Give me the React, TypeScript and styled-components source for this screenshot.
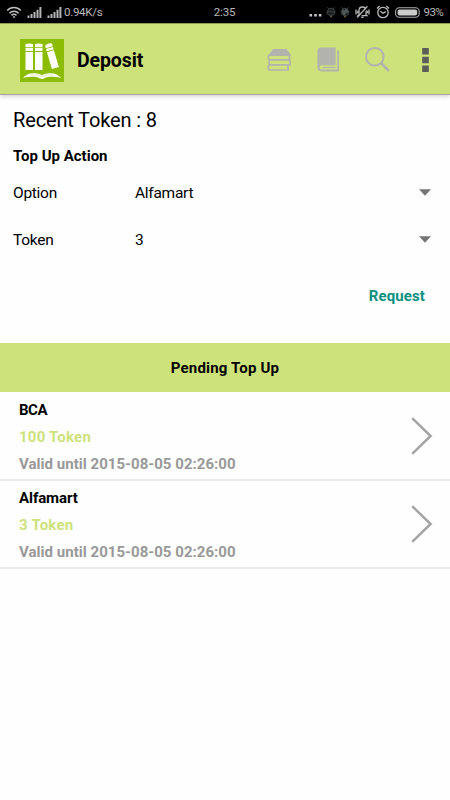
import React from 'react';
import styled, { createGlobalStyle } from 'styled-components';

const LIME = '#cde27b';

const GlobalStyle = createGlobalStyle`
  *, *::before, *::after { box-sizing: border-box; }
  body {
    margin: 0;
    background: #fff;
    font-family: Roboto, 'Liberation Sans', sans-serif;
    color: #000;
  }
`;

const Screen = styled.div`
  width: 450px;
  height: 800px;
  display: flex;
  flex-direction: column;
  overflow: hidden;
  background: #fefefe;
`;

const StatusBar = styled.header`
  height: 23px;
  flex: none;
  display: grid;
  grid-template-columns: 1fr auto 1fr;
  align-items: center;
  padding: 1px 7px 0 6px;
  background: #000;
  color: #b9b9b9;
  font-size: 11.5px;
  line-height: 22px;
`;

const StatusGroup = styled.div<{ $end?: boolean }>`
  display: flex;
  align-items: center;
  justify-content: ${(p) => (p.$end ? 'flex-end' : 'flex-start')};
  svg { display: block; flex: none; }
`;

const StatusText = styled.span<{ $spacing?: number }>`
  letter-spacing: ${(p) => p.$spacing ?? 0}px;
  white-space: nowrap;
`;

const AppBar = styled.nav`
  height: 72px;
  flex: none;
  display: flex;
  align-items: center;
  justify-content: space-between;
  padding: 1px 21px 0 20px;
  background: ${LIME};
  border-top: 1px solid #8d9c58;
  border-bottom: 1px solid #a5a5a5;
  box-shadow: 0 1px 5px rgba(0, 0, 0, 0.2);
  svg { display: block; flex: none; }
`;

const Brand = styled.div`
  display: flex;
  align-items: center;
  padding-top: 2px;
`;

const Title = styled.h1`
  margin: 0 0 0 13px;
  font-size: 19.5px;
  line-height: 24px;
  font-weight: 700;
  letter-spacing: -0.1px;
`;

const Actions = styled.div`
  display: flex;
  align-items: center;
`;

const Form = styled.section`
  height: 248px;
  flex: none;
  padding: 12px 13px 0;
`;

const Balance = styled.div`
  height: 26px;
  font-size: 20px;
  line-height: 26px;
  letter-spacing: -0.15px;
`;

const FormHeading = styled.h2`
  margin: 13px 0 0;
  font-size: 15px;
  line-height: 20px;
  font-weight: 700;
`;

const Field = styled.div`
  height: 47px;
  display: grid;
  grid-template-columns: 122px 1fr 18px;
  align-items: center;
  font-size: 15.5px;
  line-height: 20px;
  letter-spacing: -0.28px;
`;

const Fields = styled.div`
  padding-top: 3px;
`;

const FormActions = styled.div`
  display: flex;
  justify-content: flex-end;
  padding: 21px 12px 0 0;
`;

const RequestButton = styled.button`
  margin: 0;
  padding: 0;
  border: 0;
  background: none;
  color: #0c9080;
  font: 700 15px/24px Roboto, 'Liberation Sans', sans-serif;
  letter-spacing: 0.1px;
`;

const SectionHeader = styled.h2`
  height: 49px;
  flex: none;
  margin: 0;
  display: flex;
  align-items: center;
  justify-content: center;
  background: ${LIME};
  font-size: 15px;
  font-weight: 700;
  letter-spacing: 0.18px;
`;

const PendingList = styled.ul`
  list-style: none;
  margin: 0;
  padding: 1px 0 0;
`;

const PendingItem = styled.li`
  height: 88px;
  display: flex;
  align-items: center;
  justify-content: space-between;
  padding: 0 17px 0 19px;
  border-bottom: 2px solid #ebebeb;
`;

const ItemText = styled.div`
  padding-top: 2px;
`;

const ItemLine = styled.div<{ $color: string; $spacing?: number }>`
  color: ${(p) => p.$color};
  font-size: 15px;
  line-height: 27px;
  font-weight: 700;
  letter-spacing: ${(p) => p.$spacing ?? 0}px;
`;

const WifiIcon = () => (
  <svg width="16" height="13" viewBox="0 0 16 13" fill="none" stroke="#bdbdbd" strokeWidth="1.5">
    <path d="M1.2 4.6C5 .5 11 .5 14.8 4.6M3.4 7.2c2.6-2.7 6.6-2.7 9.2 0M5.5 9.4c1.5-1.4 3.5-1.4 5 0" />
    <circle cx="8" cy="11" r=".9" fill="#bdbdbd" stroke="none" />
  </svg>
);

const SignalIcon = () => (
  <svg width="15" height="11" viewBox="0 0 15 11" fill="#b4b4b4">
    <path d="M.5 8.5h2V11h-2zM3.5 7h2v4h-2zM6.5 5h2v6h-2zM9.5 2.7h2V11h-2zM12.4 0h2v11h-2z" />
  </svg>
);

const DotsIcon = () => (
  <svg width="13" height="10" viewBox="0 0 13 10" fill="#c4c4c4">
    <path d="M.5 7h2.6v2.6H.5zM5.2 7h2.6v2.6H5.2zM9.8 7h2.6v2.6H9.8z" />
  </svg>
);

const DroidIcon = ({ alt = false }: { alt?: boolean }) => (
  <svg width="10" height="12" viewBox="0 0 10 12" fill="none" stroke="#394040" strokeWidth="1">
    <path d="M1.4 1.2l1.3 1.5M8.6 1.2L7.3 2.7M.3 5.8h9.4M1.5 5.5a3.5 3.3 0 0 1 7 0v2.6L7 9.2H3L1.5 8.1z" fill="#1b1e1e" />
    {alt && <path d="M3 3.5v4.5h2V4h2v3" stroke="#6f7777" />}
    <path d="M4.2 9.8h1.6v1.4H4.2z" fill="#87713a" stroke="none" />
  </svg>
);

const SilentIcon = () => (
  <svg width="15" height="14" viewBox="0 0 15 14" fill="none" stroke="#b4b4b4" strokeWidth="1.3">
    <path d="M4 9.7V5.6C4 3.3 5.3 2 7.4 2S11 3.3 11 5.6v4.1l1 .9H3l1-.9zM6.3 12.3h2.3M1 4.5v5M14 4.5v5M2.6 5.7v2.6M12.5 5.7v2.6" />
    <path d="M3.3 13l10-11.2" stroke="#000" strokeWidth="1.6" />
    <path d="M2.2 12.5L12.4 1.3" />
  </svg>
);

const AlarmIcon = () => (
  <svg width="14" height="14" viewBox="0 0 14 14" fill="none" stroke="#bcbcbc" strokeWidth="1.3">
    <circle cx="7" cy="7.5" r="5.2" />
    <path d="M1 3.4l2.6-2.3M13 3.4l-2.6-2.3M4.4 6.3L7 8.3l2.8-1.7" />
  </svg>
);

const BatteryIcon = () => (
  <svg width="25" height="11" viewBox="0 0 25 11">
    <rect x=".6" y=".8" width="23.6" height="9.4" rx="3.7" fill="none" stroke="#aaa" strokeWidth="1.1" />
    <rect x="2.6" y="2.6" width="19.6" height="5.8" rx="1.8" fill="#cbcbcb" />
  </svg>
);

const Gap = styled.span<{ $w: number }>`
  width: ${(p) => p.$w}px;
  flex: none;
`;

const LogoIcon = () => (
  <svg width="44" height="43" viewBox="0 0 44 44" preserveAspectRatio="none">
    <rect width="44" height="44" fill="#8cbd04" />
    <g fill="#fff">
      <path d="M5.5 5.2Q9.3 4 13 5.2V8.5H5.5zM5.5 9.2H13v3.1H5.5zM5.5 13.2H13V31.8H5.5z" />
      <path d="M15 5.2Q18.8 4 22.5 5.2V8.5H15zM15 9.2h7.5v3.1H15zM15 13.2h7.5v18.6H15z" />
      <g transform="translate(25 6.6) rotate(-16)">
        <path d="M0 .2Q3.6-2 7.2 0V3H0zM0 3.7h7.2v2.6H0zM0 7.2h7.2V25H0z" />
      </g>
      <path d="M3 39.6C7 36 9 35.3 11 35.2c4-.4 8 .2 11 1.8 3-1.6 7-2.2 11-1.8 2 .1 4 .8 8.2 4.4-6-1.1-12.2-1.5-16.2.1-1.4 1.6-5 1.6-6.3 0C15 38.1 9 38.5 3 39.6z" />
    </g>
    <path d="M11 37c4-.6 8.1-.1 11 1.5 3-1.6 7-2.1 11-1.5" fill="none" stroke="#8cbd04" strokeWidth=".3" />
  </svg>
);

const BooksIcon = () => (
  <svg width="25" height="22" viewBox="0 0 25 22" fill="none" stroke="#b2b3ad" strokeWidth="1.7" strokeLinejoin="round">
    <path d="M2.3 6.2L6.4.9h12.8l3.9 5.3z" fill="#b2b3ad" />
    <path d="M23.4 6.2H3c-2.2 0-2.2 4.6 0 4.6h20.2M22.4 6.4v4.1M23.8 11H3.6c-2 0-2 4.8 0 4.8h20.2M23 11v4.7M22 16H3c-2.4 0-2.4 5 0 5h19M21 16v5" />
  </svg>
);

const BookIcon = () => (
  <svg width="23" height="25" viewBox="0 0 23 25">
    <path d="M4 .5h14.7v17.7H4.8c-1 0-2.2.6-2.2 2.1S3.7 22.6 4.8 22.6h15.4V3.4h1.9v21.1H4.7C2 24.5.4 22.8.4 20.6V4C.4 1.8 1.6.5 4 .5z" fill="#b2b3ad" />
    <path d="M5.7 20.4h13" stroke="#b2b3ad" strokeWidth="1.5" />
  </svg>
);

const SearchIcon = () => (
  <svg width="25" height="25" viewBox="0 0 25 25" fill="none" stroke="#b2b3ad" strokeWidth="2">
    <circle cx="9.8" cy="9.8" r="8.8" />
    <path d="M16 16l8 8" strokeWidth="2.5" />
  </svg>
);

const OverflowIcon = () => (
  <svg width="7" height="24" viewBox="0 0 7 24" fill="#5d5d57">
    <path d="M.2 0h6.6v6.4H.2zM.2 8.8h6.6v6.4H.2zM.2 17.5h6.6V24H.2z" />
  </svg>
);

const DropdownIcon = () => (
  <svg width="12" height="7" viewBox="0 0 12 7">
    <path d="M0 .3h12L6 6.8z" fill="#757575" />
  </svg>
);

const ChevronIcon = () => (
  <svg width="22" height="38" viewBox="0 0 22 38" fill="none" stroke="#a5a5a5" strokeWidth="2.5">
    <path d="M1.2 1.2L19.6 19 1.2 36.8" />
  </svg>
);

const fields = [
  { label: 'Option', value: 'Alfamart' },
  { label: 'Token', value: '3' },
];

const pending = [
  { name: 'BCA', nameSpacing: -0.45, tokens: '100 Token', tokenSpacing: 0.22, valid: 'Valid until 2015-08-05 02:26:00' },
  { name: 'Alfamart', nameSpacing: -0.08, tokens: '3 Token', tokenSpacing: 0.22, valid: 'Valid until 2015-08-05 02:26:00' },
];

export default function App() {
  return (
    <Screen>
      <GlobalStyle />
      <StatusBar>
        <StatusGroup>
          <WifiIcon />
          <Gap $w={5} />
          <SignalIcon />
          <Gap $w={5} />
          <SignalIcon />
          <Gap $w={2} />
          <StatusText $spacing={-0.28}>0.94K/s</StatusText>
        </StatusGroup>
        <StatusText $spacing={-0.2}>2:35</StatusText>
        <StatusGroup $end>
          <DotsIcon />
          <Gap $w={4} />
          <DroidIcon />
          <Gap $w={4} />
          <DroidIcon alt />
          <Gap $w={5} />
          <SilentIcon />
          <Gap $w={6} />
          <AlarmIcon />
          <Gap $w={5} />
          <BatteryIcon />
          <Gap $w={4} />
          <StatusText $spacing={-0.65}>93%</StatusText>
        </StatusGroup>
      </StatusBar>
      <AppBar>
        <Brand>
          <LogoIcon />
          <Title>Deposit</Title>
        </Brand>
        <Actions>
          <BooksIcon />
          <Gap $w={25} />
          <BookIcon />
          <Gap $w={25} />
          <SearchIcon />
          <Gap $w={32} />
          <OverflowIcon />
        </Actions>
      </AppBar>
      <Form>
        <Balance>Recent Token : 8</Balance>
        <FormHeading>Top Up Action</FormHeading>
        <Fields>
          {fields.map((f) => (
            <Field key={f.label}>
              <span>{f.label}</span>
              <span>{f.value}</span>
              <DropdownIcon />
            </Field>
          ))}
        </Fields>
        <FormActions>
          <RequestButton>Request</RequestButton>
        </FormActions>
      </Form>
      <SectionHeader>Pending Top Up</SectionHeader>
      <PendingList>
        {pending.map((p) => (
          <PendingItem key={p.name}>
            <ItemText>
              <ItemLine $color="#000" $spacing={p.nameSpacing}>{p.name}</ItemLine>
              <ItemLine $color={LIME} $spacing={p.tokenSpacing}>{p.tokens}</ItemLine>
              <ItemLine $color="#999" $spacing={0.03}>{p.valid}</ItemLine>
            </ItemText>
            <ChevronIcon />
          </PendingItem>
        ))}
      </PendingList>
    </Screen>
  );
}
